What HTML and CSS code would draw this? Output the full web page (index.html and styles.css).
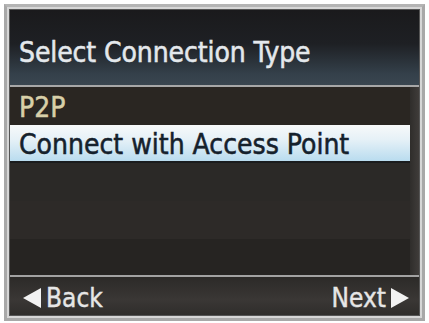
FILE: index.html
```html
<!DOCTYPE html>
<html>
<head>
<meta charset="utf-8">
<link rel="stylesheet" href="styles.css">
</head>
<body>
<div class="frame">
  <div class="screen">
    <div class="header"><span class="title">Select Connection Type</span></div>
    <div class="list">
      <div class="rows">
        <div class="row row-a"><span class="item p2p">P2P</span></div>
        <div class="row selected"><span class="item">Connect with Access Point</span></div>
        <div class="row row-c"></div>
        <div class="row row-d"></div>
        <div class="row row-e"></div>
      </div>
      <div class="scroll"></div>
    </div>
    <div class="footer">
      <div class="nav back">
        <svg class="tri" width="20" height="22" viewBox="0 0 20 22"><polygon points="19,1 19,21 1,11" fill="#f2f2f2"/></svg>
        <span>Back</span>
      </div>
      <div class="nav next">
        <span>Next</span>
        <svg class="tri" width="20" height="22" viewBox="0 0 20 22"><polygon points="1,1 1,21 19,11" fill="#f2f2f2"/></svg>
      </div>
    </div>
  </div>
</div>
</body>
</html>
```
FILE: styles.css
```css
html, body {
  margin: 0;
  padding: 0;
  background: #ffffff;
}
body {
  width: 429px;
  height: 323px;
  overflow: hidden;
  font-family: "DejaVu Sans Condensed", "DejaVu Sans", sans-serif;
}
.frame {
  margin: 4px;
  width: 421px;
  height: 317px;
  box-sizing: border-box;
  border: 3px solid #a8a8a8;
  border-top-color: #b4b4b4;
  padding: 2px;
  background: #d6d6d6;
}
.screen {
  width: 100%;
  height: 100%;
  background: #2a2725;
  display: flex;
  flex-direction: column;
  border: 1px solid #555;
  box-sizing: border-box;
}
.header {
  height: 77px;
  flex: none;
  background: linear-gradient(to bottom, #1a1a1c 0%, #1e2024 45%, #34404a 85%, #3a4650 100%);
  border-bottom: 2px solid #a7a7a7;
  display: flex;
  align-items: center;
  padding-left: 9px;
  padding-top: 9px;
  box-sizing: border-box;
}
.title {
  color: #e4e8ec;
  font-size: 28px;
  letter-spacing: -0.1px;
  -webkit-text-stroke: 0.5px #e4e8ec;
}
.list {
  flex: none;
  height: 188px;
  display: flex;
}
.rows {
  flex: 1;
  display: flex;
  flex-direction: column;
}
.row {
  height: 38px;
  flex: none;
  display: flex;
  align-items: center;
  padding-left: 9px;
  box-sizing: border-box;
}
.row-a { background: #2a2622; padding-top: 3px; }
.row-c { background: #2b2927; }
.row-d { background: #2d2a28; }
.row-e { background: #262422; }
.item {
  font-size: 28px;
  color: #15212c;
  -webkit-text-stroke: 0.5px #15212c;
}
.p2p {
  color: #d8cfa8;
  -webkit-text-stroke: 0.5px #d8cfa8;
}
.selected {
  background: linear-gradient(to bottom, #f7f9fa 0%, #e6f1f7 40%, #b9dcef 100%);
  border-bottom: 2px solid #1a1c1e;
  padding-top: 2px;
}
.scroll {
  width: 9px;
  flex: none;
  background: linear-gradient(to right, #2f2d2b, #3f3c3a);
}
.footer {
  flex: 1;
  border-top: 2px solid #a2a2a2;
  background: linear-gradient(to bottom, #2c2a28, #3a3735 60%, #2f2d2b);
  display: flex;
  justify-content: space-between;
  align-items: center;
  padding: 4px 9px 0 12px;
}
.nav {
  display: flex;
  align-items: center;
  color: #e6e6e6;
  font-size: 26px;
  -webkit-text-stroke: 0.4px #e6e6e6;
}
.back .tri { margin-right: 4px; }
.next .tri { margin-left: 4px; }
```
